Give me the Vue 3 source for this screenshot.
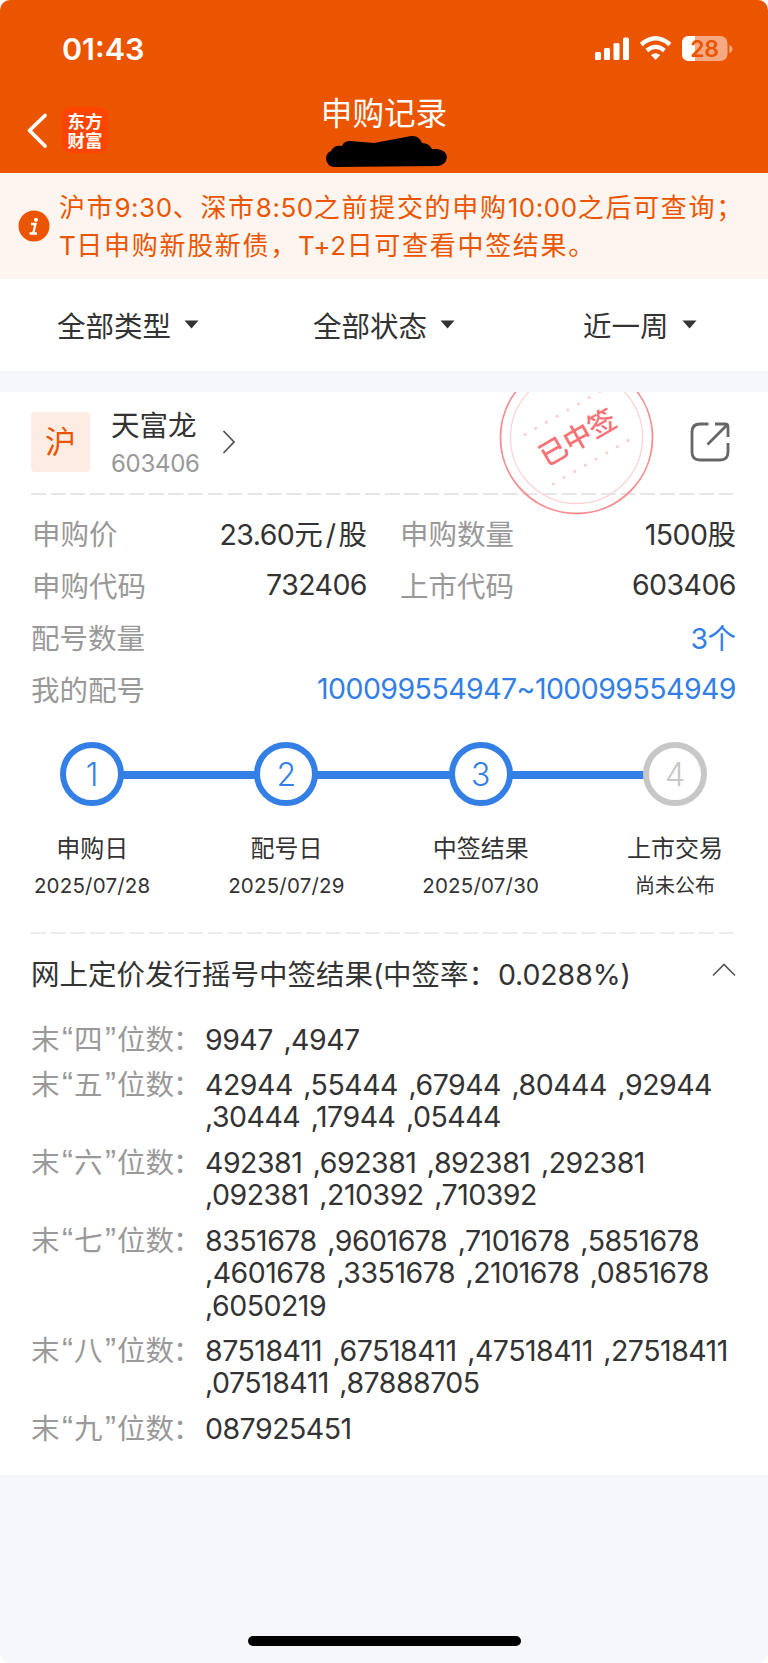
<script setup>
const filters = [
  { text: '全部类型', cls: 'f1' },
  { text: '全部状态', cls: 'f2' },
  { text: '近一周', cls: 'f3' },
]
const steps = [
  { n: '1', title: '申购日', date: '2025/07/28', done: true },
  { n: '2', title: '配号日', date: '2025/07/29', done: true },
  { n: '3', title: '中签结果', date: '2025/07/30', done: true },
  { n: '4', title: '上市交易', date: '尚未公布', done: false },
]
const results = [
  { d: '四', lines: ['9947 ,4947'] },
  { d: '五', lines: ['42944 ,55444 ,67944 ,80444 ,92944', ',30444 ,17944 ,05444'] },
  { d: '六', lines: ['492381 ,692381 ,892381 ,292381', ',092381 ,210392 ,710392'] },
  { d: '七', lines: ['8351678 ,9601678 ,7101678 ,5851678', ',4601678 ,3351678 ,2101678 ,0851678', ',6050219'] },
  { d: '八', lines: ['87518411 ,67518411 ,47518411 ,27518411', ',07518411 ,87888705'] },
  { d: '九', lines: ['087925451'] },
]
const dotsTop = [0, 1, 2, 3, 4, 5, 6, 7, 8].map((i) => ({ x: 25 + i * 10.7, y: 42 - i * 6.15 }))
const dotsBottom = [0, 1, 2, 3, 4, 5, 6, 7].map((i) => ({ x: 53.3 + i * 10.7, y: 91.3 - i * 6.2 }))
</script>

<template>
  <div class="screen">
    <header class="header">
      <div class="status">
        <span class="time">01:43</span>
        <svg class="status-icons" width="140" height="30" viewBox="0 0 140 30">
          <g fill="#fff">
            <rect x="2" y="18" width="6" height="8" rx="1.5" />
            <rect x="11" y="14" width="6" height="12" rx="1.5" />
            <rect x="20.5" y="9" width="6" height="17" rx="1.5" />
            <rect x="30" y="3.5" width="6" height="22.5" rx="1.5" />
          </g>
          <g fill="none" stroke="#fff" stroke-width="4.3">
            <path d="M48.3 10.5Q62.5-1.8 76.9 10.5" />
            <path d="M53.8 16.5Q62.5 9.2 71.4 16.5" />
          </g>
          <path d="M58 21Q62.5 17.3 67.3 21L62.6 26Z" fill="#fff" />
          <rect x="89" y="2" width="45.5" height="25" rx="7" fill="#f6a981" />
          <path d="M102 2H96Q89 2 89 9V20Q89 27 96 27H102Z" fill="#fff" />
          <path d="M136.3 11Q139.5 12 139.5 15Q139.5 18 136.3 19Z" fill="#f6a981" />
          <text x="111.5" y="22.8" text-anchor="middle" class="battery">28</text>
        </svg>
      </div>
      <div class="nav">
        <svg class="back" width="24" height="36" viewBox="0 0 24 36">
          <path d="M18 2.5L2.5 17.5L18 33" fill="none" stroke="#fff" stroke-width="3.8" stroke-linecap="round" stroke-linejoin="round" />
        </svg>
        <div class="logo">东方财富</div>
        <div class="heading">
          <h1>申购记录</h1>
          <svg class="scribble" width="122" height="32" viewBox="0 0 122 32">
            <path d="M9 31Q2 30 1 23Q1 17 6 15Q9 9 17 10Q19 5 25 5L49 7L86 0Q94-1 97 7Q104 7 107 13H112Q121 14 122 21Q121 29 113 30Z" fill="#000" />
          </svg>
        </div>
      </div>
    </header>

    <section class="notice">
      <svg class="info" width="32" height="32" viewBox="0 0 32 32">
        <circle cx="16" cy="16" r="15.5" fill="#eb5500" />
        <circle cx="18" cy="9.7" r="2" fill="#fff" />
        <path d="M13 14H17.5L15.3 23M11.5 23.5H19" fill="none" stroke="#fff" stroke-width="2.3" />
      </svg>
      <div class="notice-text">
        <p>沪市<i class="n">9:30</i>、深市<i class="n">8:50</i>之前提交的申购<i class="n">10:00</i>之后可查询；</p>
        <p><i class="n">T</i>日申购新股新债，<i class="n">T+2</i>日可查看中签结果。</p>
      </div>
    </section>

    <nav class="filters">
      <div v-for="f in filters" :key="f.text" class="filter" :class="f.cls">
        <span>{{ f.text }}</span>
        <svg width="16" height="9" viewBox="0 0 16 9"><path d="M.5 .5H14.5L7.5 8.5Z" fill="#333" /></svg>
      </div>
    </nav>

    <main class="card">
      <svg class="stamp" width="156" height="124" viewBox="0 0 156 124">
        <g fill="none">
          <circle cx="78.5" cy="45.5" r="76" stroke="#f58f91" stroke-width="1.8" />
          <circle cx="78.5" cy="45.5" r="66" stroke="#fbd5d6" stroke-width="1.3" />
        </g>
        <g fill="#fbd0d1">
          <circle v-for="(p, i) in dotsTop" :key="'t' + i" :cx="p.x + 2" :cy="p.y + .5" r="1.6" />
          <circle v-for="(p, i) in dotsBottom" :key="'b' + i" :cx="p.x + 2" :cy="p.y + .5" r="1.6" />
        </g>
        <text x="79.5" y="56" text-anchor="middle" transform="rotate(-30 78.5 45.5)" class="stamp-text">已中签</text>
      </svg>

      <div class="stock">
        <div class="market">沪</div>
        <div class="stock-name">
          <strong>天富龙</strong>
          <span>603406</span>
        </div>
        <svg class="go" width="14" height="24" viewBox="0 0 14 24">
          <path d="M1.5 1L12 12L1.5 23" fill="none" stroke="#555" stroke-width="1.8" />
        </svg>
        <svg class="share" width="40" height="40" viewBox="0 0 40 40">
          <g fill="none" stroke="#666" stroke-width="2.8">
            <path d="M18.5 2H10Q2 2 2 10V30Q2 38 10 38H30Q38 38 38 30V21" />
            <path d="M25 2H35Q38 2 38 5V15M17.5 22.5L37 3" />
          </g>
        </svg>
      </div>

      <svg class="dash" width="702" height="2"><line x1="0" y1="1" x2="702" y2="1" stroke="#dedede" stroke-width="1.5" stroke-dasharray="15 4.65" /></svg>

      <div class="info-grid">
        <div class="row">
          <span class="k inset">申购价</span><span class="v left"><i class="n">23.60</i>元<i class="n slash">/</i>股</span>
          <span class="k second">申购数量</span><span class="v"><i class="n">1500</i>股</span>
        </div>
        <div class="row">
          <span class="k inset">申购代码</span><span class="v left"><i class="n">732406</i></span>
          <span class="k second">上市代码</span><span class="v"><i class="n">603406</i></span>
        </div>
        <div class="row"><span class="k">配号数量</span><span class="v blue"><i class="n">3</i>个</span></div>
        <div class="row"><span class="k">我的配号</span><span class="v blue"><i class="n">100099554947~100099554949</i></span></div>
      </div>

      <div class="steps">
        <div v-for="s in steps" :key="s.n" class="step" :class="{ done: s.done }">
          <div class="circle">{{ s.n }}</div>
          <div class="step-title">{{ s.title }}</div>
          <div class="step-date">{{ s.date }}</div>
        </div>
      </div>

      <svg class="dash" width="702" height="2"><line x1="0" y1="1" x2="702" y2="1" stroke="#ececec" stroke-width="2" stroke-dasharray="15 4.65" /></svg>

      <div class="result-head">
        <span>网上定价发行摇号中签结果<i class="n">(</i>中签率：<i class="n rate">0.0288%)</i></span>
        <svg width="24" height="14" viewBox="0 0 24 14"><path d="M1 12.5L12 1.5L23 12.5" fill="none" stroke="#555" stroke-width="1.6" /></svg>
      </div>

      <div class="results">
        <div v-for="r in results" :key="r.d" class="result">
          <div class="tail">末<b>“</b>{{ r.d }}<b>”</b>位数<em>：</em></div>
          <div class="numbers"><div v-for="l in r.lines" :key="l">{{ l }}</div></div>
        </div>
      </div>
    </main>

    <footer class="bottom"><div class="home-bar"></div></footer>
  </div>
</template>

<style>
body { margin: 0; background: #fff; }
</style>

<style scoped>
.screen {
  width: 768px; height: 1663px; display: flex; flex-direction: column; overflow: hidden;
  border-radius: 10px; background: #f5f7fa; color: #333;
  font-family: Inter, "Noto Sans CJK SC", sans-serif; font-size: 28.5px; font-weight: 400;
}
.screen * { box-sizing: border-box; }
i, em { font-style: normal; }
svg { display: block; flex: none; overflow: visible; }
.stamp { overflow: hidden; }
.n { letter-spacing: -.55px; }
.slash { margin: 0 3px; }
.rate { letter-spacing: -.1px; margin-left: 1px; }

.header { height: 173px; background: #eb5500; color: #fff; flex: none; }
.status { height: 89px; padding: 9px 36px 0 62px; display: flex; justify-content: space-between; align-items: center; }
.time { font-size: 30.5px; font-weight: 600; letter-spacing: 0; line-height: 40px; }
.status-icons { margin: 0 -1px 0 0; }
.battery { font-size: 23px; font-weight: 600; fill: #eb5500; letter-spacing: -.3px; }
.nav { height: 84px; display: grid; grid-template-columns: 35px 232px 1fr; padding-left: 27px; align-items: start; }
.back { margin-top: 24px; }
.logo {
  width: 46px; height: 46px; margin-top: 18px; padding: 4px 5px; border-radius: 9px; background: #ff4500;
  font: 700 17.5px/19px "Noto Sans CJK SC", sans-serif; text-align: center;
}
.heading { width: 180px; display: flex; flex-direction: column; align-items: center; }
h1 { margin: 4px 0 0; font-size: 31.6px; font-weight: 400; line-height: 42px; white-space: nowrap; }
.scribble { margin: 1px 0 0 3px; }

.notice { height: 106px; background: #fff5f0; color: #eb5500; display: flex; padding: 16px 0 0 18px; flex: none; }
.info { margin: 21px 9px 0 0; }
.notice-text { font-size: 26px; line-height: 37.5px; letter-spacing: 1.7px; white-space: nowrap; }
.notice-text p { margin: 0; }
.notice-text .n { letter-spacing: .55px; }

.filters { height: 92px; background: #fff; display: flex; flex: none; align-items: center; padding: 0 0 2px 57px; }
.filter { display: flex; align-items: center; gap: 13px; white-space: nowrap; }
.filter svg { margin-top: 1px; }
.f1 { width: 256px; }
.f2 { width: 270px; }

.card { position: relative; margin-top: 21px; height: 1083px; background: #fff; padding-left: 31px; flex: none; }
.stamp { position: absolute; left: 498px; top: 0; }
.stamp-text { font: 500 28px "Noto Sans CJK SC", sans-serif; fill: #f57376; }
.stock { height: 101px; display: flex; align-items: flex-start; }
.market {
  width: 59px; height: 60px; margin-top: 20px; border-radius: 4px; background: #fdece4; color: #eb5500;
  font-size: 31px; line-height: 60px; text-align: center;
}
.stock-name { width: 101px; margin: 14px 0 0 21px; display: flex; flex-direction: column; white-space: nowrap; }
.stock-name strong { font-weight: 400; line-height: 40px; }
.stock-name span { color: #999; font-size: 24px; line-height: 35px; letter-spacing: -.3px; }
.go { margin: 38px 0 0 10px; }
.share { margin: 30px 0 0 454px; }

.info-grid { margin-top: 12px; width: 705px; }
.row { height: 51.9px; display: flex; align-items: center; white-space: nowrap; }
.k { color: #999; }
.v { margin-left: auto; }
.v.left { width: 200px; margin-left: 0; text-align: right; }
.row .k:first-child { width: 136px; }
.k.inset { padding-left: 1px; }
.second { margin-left: 33px; }
.blue { color: #337fe5; }

.steps { display: grid; grid-template-columns: repeat(4, 194.3px); margin: 27.5px 0 0 -36px; height: 189.5px; }
.step { position: relative; display: flex; flex-direction: column; align-items: center; white-space: nowrap; }
.step:not(:last-child)::after {
  content: ""; position: absolute; left: calc(50% + 31px); top: 29px; width: 133px; height: 8px; background: #337fe5;
}
.circle {
  width: 64px; height: 64px; border: 6px solid #c7c7c7; border-radius: 50%; color: #c7c7c7;
  font-size: 32px; line-height: 53px; text-align: center; font-weight: 300;
}
.done .circle { border-color: #337fe5; color: #337fe5; }
.step-title { margin-top: 25px; font-size: 24px; line-height: 36px; }
.step-date { margin-top: 4px; font-size: 20px; line-height: 30px; }
.done .step-date { font-size: 20.5px; letter-spacing: .2px; }

.result-head { height: 80px; width: 704px; padding-bottom: 3px; display: flex; justify-content: space-between; align-items: center; white-space: nowrap; }
.result-head svg { margin: -5px -1px 0 0; }
.results { margin-top: 10px; display: flex; flex-direction: column; gap: 13.3px; }
.result { display: flex; line-height: 32.3px; white-space: nowrap; }
.tail { width: 174px; color: #999; height: 32.3px; }
.tail b { display: inline-block; width: 14.5px; height: 20px; line-height: 20px; text-align: center; font-family: "Liberation Sans", sans-serif; font-size: 33px; font-weight: 400; text-indent: 1.5px; }
.tail em { margin-left: -1px; }
.numbers { letter-spacing: -.5px; word-spacing: 3px; }
.bottom { flex: 1; display: flex; align-items: flex-end; justify-content: center; padding-bottom: 17px; }
.home-bar { width: 273px; height: 10px; border-radius: 5px; background: #000; }
</style>
